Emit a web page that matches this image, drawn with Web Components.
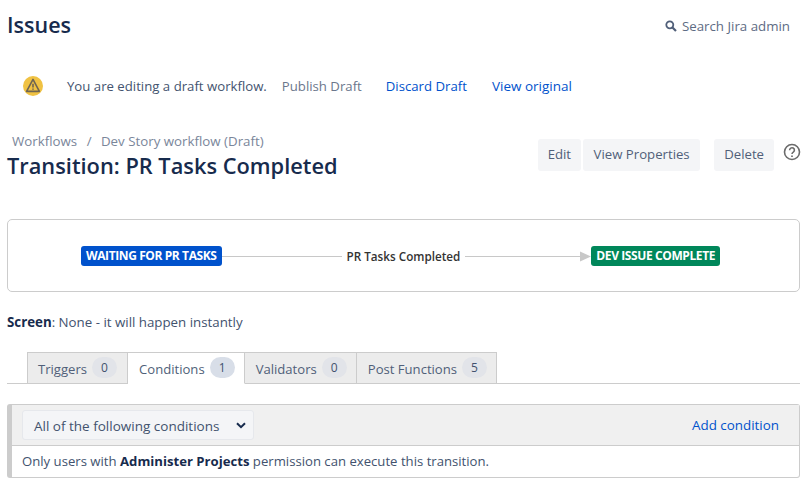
<!DOCTYPE html>
<html>
<head>
<meta charset="utf-8">
<title>Transition</title>
<style>
  html, body { margin: 0; background: #fff; }
  body { font: 14px/20px "Open Sans", "Noto Sans", sans-serif; color: #42526e; }
</style>
</head>
<body>
<admin-page>
  <page-top></page-top>
  <draft-banner></draft-banner>
  <transition-header></transition-header>
  <transition-diagram></transition-diagram>
  <screen-line></screen-line>
  <transition-tabs></transition-tabs>
  <conditions-panel></conditions-panel>
</admin-page>

<script>
class AdminPage extends HTMLElement {
  constructor() {
    super();
    this.attachShadow({ mode: "open" });
    this.shadowRoot.innerHTML = `
      <style>
        :host { display: block; width: 809px; height: 503px; overflow: hidden; padding: 0 9px 0 7px; box-sizing: border-box; }
      </style>
      <slot></slot>`;
  }
}

class PageTop extends HTMLElement {
  constructor() {
    super();
    this.attachShadow({ mode: "open" });
    this.shadowRoot.innerHTML = `
      <style>
        :host { display: flex; justify-content: space-between; align-items: center; height: 50px; }
        h1 { margin: 0; font-size: 21.5px; line-height: 50px; font-weight: 600; color: #172b4d; }
        .search { display: flex; align-items: center; gap: 5px; font-size: 13.3px; color: #5e6c84; padding: 1px 10px 0 0; }
        svg { display: block; }
      </style>
      <h1>Issues</h1>
      <div class="search">
        <svg width="12" height="12" viewBox="0 0 12 12" fill="none" stroke="#505f79">
          <circle cx="4.8" cy="4.8" r="3.5" stroke-width="1.8"/>
          <path d="M7.5 7.5l3.5 3.5" stroke-width="2.2"/>
        </svg>
        <span>Search Jira admin</span>
      </div>`;
  }
}

class DraftBanner extends HTMLElement {
  constructor() {
    super();
    this.attachShadow({ mode: "open" });
    this.shadowRoot.innerHTML = `
      <style>
        :host { display: flex; align-items: center; height: 72px; padding-left: 16px; font-size: 13.2px; }
        svg { display: block; margin-right: 24px; }
        .msg { color: #44546f; margin-right: 15px; }
        .muted { color: #6b778c; margin-right: 24px; }
        a { color: #0052cc; text-decoration: none; margin-right: 25px; }
        a:last-child { font-size: 13.5px; }
      </style>
      <svg width="20" height="20" viewBox="0 0 20 20">
        <circle cx="10" cy="10" r="10" fill="#f0c243"/>
        <path d="M10 3.4 L16.4 15.4 H3.6 Z" fill="none" stroke="#6f6552" stroke-width="1.6" stroke-linejoin="round"/>
        <path d="M10 7.8v3.6M10 12.4v1.4" stroke="#6f6552" stroke-width="1.6"/>
      </svg>
      <span class="msg">You are editing a draft workflow.</span>
      <span class="muted">Publish Draft</span>
      <a>Discard Draft</a>
      <a>View original</a>`;
  }
}

class AuiButton extends HTMLElement {
  constructor() {
    super();
    this.attachShadow({ mode: "open" });
    this.shadowRoot.innerHTML = `
      <style>
        :host { display: block; height: 32px; line-height: 30px; padding: 0 var(--pad, 10.5px); background: #f4f5f7; border-radius: 3px; color: #505f79; font-size: 13.2px; }
      </style>
      <slot></slot>`;
  }
}

class TransitionHeader extends HTMLElement {
  constructor() {
    super();
    this.attachShadow({ mode: "open" });
    this.shadowRoot.innerHTML = `
      <style>
        :host { display: flex; justify-content: space-between; height: 97px; }
        .crumbs { padding: 9px 0 0 5px; font-size: 13.3px; line-height: 20px; color: #7a869a; }
        .crumbs i { font-style: normal; margin: 0 6px; }
        h2 { margin: 0; font-size: 21.8px; line-height: 30px; font-weight: 600; color: #172b4d; white-space: nowrap; }
        .ops { display: flex; align-items: flex-start; padding-top: 17px; }
        .gap { margin-left: 2px; }
        .far { margin-left: 14px; }
        svg { display: block; margin: 4px -1px 0 9px; }
      </style>
      <div>
        <div class="crumbs">Workflows<i> / </i>Dev Story workflow (Draft)</div>
        <h2>Transition: PR Tasks Completed</h2>
      </div>
      <div class="ops">
        <aui-button style="--pad:10px">Edit</aui-button>
        <aui-button class="gap">View Properties</aui-button>
        <aui-button class="far" style="--pad:10px">Delete</aui-button>
        <svg width="18" height="18" viewBox="0 0 18 18" fill="none">
          <circle cx="9" cy="9" r="7.5" stroke="#6b6b6b" stroke-width="1.6"/>
          <path d="M6.6 7.2a2.4 2.4 0 1 1 3.7 2c-.9.6-1.3 1-1.3 1.9" stroke="#6b6b6b" stroke-width="1.6"/>
          <path d="M9 12.4v1.6" stroke="#6b6b6b" stroke-width="1.7"/>
        </svg>
      </div>`;
  }
}

class StatusLozenge extends HTMLElement {
  constructor() {
    super();
    this.attachShadow({ mode: "open" });
    this.shadowRoot.innerHTML = `
      <style>
        :host { display: block; flex: none; height: 20px; line-height: 20px; padding: 0 5px; border-radius: 3px; color: #fff; font-size: 12px; font-weight: 700; letter-spacing: -0.4px; background: var(--bg); white-space: nowrap; }
      </style>
      <slot></slot>`;
  }
}

class TransitionDiagram extends HTMLElement {
  constructor() {
    super();
    this.attachShadow({ mode: "open" });
    this.shadowRoot.innerHTML = `
      <style>
        :host { display: flex; align-items: center; height: 73px; box-sizing: border-box; border: 1px solid #ccc; border-radius: 5px; padding: 0 79px 0 73px; }
        .line { height: 1px; background: #c8c8c8; margin-top: 1px; }
        .label { font-size: 11.7px; font-weight: 600; color: #333; padding: 0 5px; white-space: nowrap; }
        svg { display: block; flex: none; margin-top: 1px; }
      </style>
      <status-lozenge style="--bg:#0052cc">WAITING FOR PR TASKS</status-lozenge>
      <div class="line" style="flex: 120"></div>
      <div class="label">PR Tasks Completed</div>
      <div class="line" style="flex: 115"></div>
      <svg width="11" height="11" viewBox="0 0 11 11"><path d="M0 0.5 L11 5.5 L0 10.5 Z" fill="#c8c8c8"/></svg>
      <status-lozenge style="--bg:#00875a">DEV ISSUE COMPLETE</status-lozenge>`;
  }
}

class ScreenLine extends HTMLElement {
  constructor() {
    super();
    this.attachShadow({ mode: "open" });
    this.shadowRoot.innerHTML = `
      <style>
        :host { display: block; height: 60px; line-height: 20px; padding-top: 20px; box-sizing: border-box; font-size: 13.3px; color: #42526e; }
        b { color: #172b4d; font-weight: 700; }
      </style>
      <b>Screen</b>: None - it will happen instantly`;
  }
}

class TransitionTab extends HTMLElement {
  constructor() {
    super();
    this.attachShadow({ mode: "open" });
    this.shadowRoot.innerHTML = `
      <style>
        :host { display: flex; align-items: center; gap: 5px; box-sizing: border-box; height: 32px; margin-bottom: -1px; padding: 1px 9px 0 11px; background: #ececec; border: 1px solid #ccc; border-left-width: 0; color: #505f79; font-size: 13.1px; white-space: nowrap; }
        :host([first]) { border-left-width: 1px; padding: 1px 10px 0; }
        :host([active]) { background: #fff; border-bottom-color: #fff; }
        span { display: block; box-sizing: border-box; width: 25px; height: 21px; line-height: 21px; margin-top: -3px; border-radius: 11px; text-align: center; background: #e2e4e9; font-size: 12px; color: #42526e; }
        :host([active]) span { background: #d8dee8; }
      </style>
      <slot></slot><span></span>`;
    this.shadowRoot.querySelector("span").textContent = this.getAttribute("count");
  }
}

class TransitionTabs extends HTMLElement {
  constructor() {
    super();
    this.attachShadow({ mode: "open" });
    this.shadowRoot.innerHTML = `
      <style>
        :host { display: flex; height: 32px; box-sizing: border-box; padding-left: 20px; border-bottom: 1px solid #ccc; }
      </style>
      <transition-tab first count="0">Triggers</transition-tab>
      <transition-tab active count="1">Conditions</transition-tab>
      <transition-tab count="0">Validators</transition-tab>
      <transition-tab count="5">Post Functions</transition-tab>`;
  }
}

class ConditionsPanel extends HTMLElement {
  constructor() {
    super();
    this.attachShadow({ mode: "open" });
    this.shadowRoot.innerHTML = `
      <style>
        :host { display: block; margin-top: 20px; box-sizing: border-box; height: 74px; border: 1px solid #ccc; border-left: 5px solid #ccc; border-radius: 3px; }
        .head { display: flex; justify-content: space-between; align-items: center; height: 41px; box-sizing: border-box; padding: 0 20px 0 10px; background: #f0f0f0; border-bottom: 1px solid #ccc; }
        .select { display: flex; justify-content: space-between; align-items: center; box-sizing: border-box; width: 232px; height: 30px; padding: 1px 7px 0 11px; background: #f4f5f7; border: 1px solid #e6e8ec; border-radius: 3px; font-size: 13.5px; color: #42526e; }
        a { color: #0052cc; font-size: 13.4px; }
        .body { padding: 5px 10px; font-size: 13.15px; color: #42526e; white-space: nowrap; }
        b { color: #172b4d; font-weight: 700; }
        svg { display: block; }
      </style>
      <div class="head">
        <div class="select">
          <span>All of the following conditions</span>
          <svg width="10" height="7" viewBox="0 0 10 7" fill="none"><path d="M1 1.2l4 4 4-4" stroke="#172b4d" stroke-width="2"/></svg>
        </div>
        <a>Add condition</a>
      </div>
      <div class="body">Only users with <b>Administer Projects</b> permission can execute this transition.</div>`;
  }
}

customElements.define("admin-page", AdminPage);
customElements.define("page-top", PageTop);
customElements.define("draft-banner", DraftBanner);
customElements.define("aui-button", AuiButton);
customElements.define("transition-header", TransitionHeader);
customElements.define("status-lozenge", StatusLozenge);
customElements.define("transition-diagram", TransitionDiagram);
customElements.define("screen-line", ScreenLine);
customElements.define("transition-tab", TransitionTab);
customElements.define("transition-tabs", TransitionTabs);
customElements.define("conditions-panel", ConditionsPanel);
</script>
</body>
</html>
